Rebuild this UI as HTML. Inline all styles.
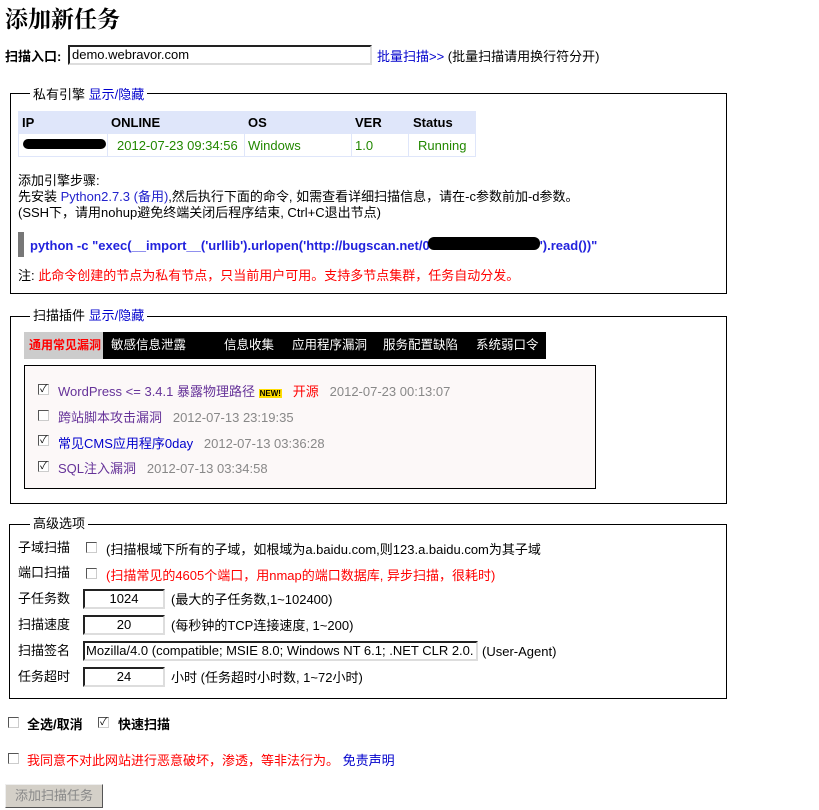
<!DOCTYPE html>
<html><head><meta charset="utf-8"><style>
*{margin:0;padding:0;box-sizing:border-box}
body{width:819px;height:810px;background:#fff;font-family:"Liberation Sans","Noto Sans CJK SC",sans-serif;font-size:13px;color:#000;position:relative;overflow:hidden}
.a{position:absolute;white-space:nowrap;line-height:15px}
.blue{color:#0000cc}
.red{color:#f00}
.fs{position:absolute;border:1px solid #000}
.lg{position:absolute;background:#fff;padding:0 3px;line-height:15px}
.cb{position:absolute;width:11px;height:11px;border:1px solid #555;border-right-color:#ccc;border-bottom-color:#ccc;background:#fff;font-size:10px;line-height:9px;text-align:center}
.inp{position:absolute;height:20px;border:2px inset #ccc;border-color:#777 #ddd #ddd #777;background:#fff;line-height:16px;font-size:13px;text-align:center;white-space:nowrap}
.grn{color:#228800}
.tab{position:absolute;top:332px;height:27px;line-height:27px;color:#fff;font-size:12.5px;white-space:nowrap}
</style></head><body>
<div class="a" style="left:5px;top:6px;font-size:23px;line-height:28px;font-weight:bold;font-family:'Liberation Serif','Noto Serif CJK SC',serif">添加新任务</div>
<div class="a" style="left:5px;top:49px;font-weight:bold">扫描入口:</div>
<div class="inp" style="left:68px;top:45px;width:304px;text-align:left;padding-left:2px">demo.webravor.com</div>
<div class="a" style="left:377px;top:49px"><span class="blue">批量扫描&gt;&gt;</span> (批量扫描请用换行符分开)</div>

<div class="fs" style="left:10px;top:93px;width:717px;height:201px"></div>
<div class="lg" style="left:30px;top:87px">私有引擎 <span class="blue">显示/隐藏</span></div>
<div style="position:absolute;left:18px;top:111px;width:458px;height:46px;background:#dfe6fa"></div>
<div style="position:absolute;left:19px;top:134px;width:456px;height:22px;background:#fff"></div>
<div style="position:absolute;left:107px;top:134px;width:1px;height:22px;background:#dfe6fa"></div>
<div style="position:absolute;left:244px;top:134px;width:1px;height:22px;background:#dfe6fa"></div>
<div style="position:absolute;left:351px;top:134px;width:1px;height:22px;background:#dfe6fa"></div>
<div style="position:absolute;left:408px;top:134px;width:1px;height:22px;background:#dfe6fa"></div>
<div class="a" style="left:22px;top:115px;font-weight:bold">IP</div>
<div class="a" style="left:111px;top:115px;font-weight:bold">ONLINE</div>
<div class="a" style="left:248px;top:115px;font-weight:bold">OS</div>
<div class="a" style="left:355px;top:115px;font-weight:bold">VER</div>
<div class="a" style="left:413px;top:115px;font-weight:bold">Status</div>
<div style="position:absolute;left:23px;top:139px;width:83px;height:10px;background:#000;border-radius:5px"></div>
<div class="a grn" style="left:117px;top:138px">2012-07-23 09:34:56</div>
<div class="a grn" style="left:248px;top:138px">Windows</div>
<div class="a grn" style="left:355px;top:138px">1.0</div>
<div class="a grn" style="left:418px;top:138px">Running</div>
<div class="a" style="left:18px;top:173px">添加引擎步骤:</div>
<div class="a" style="left:18px;top:189px">先安装 <span style="color:#2222cc">Python2.7.3 (备用)</span>,然后执行下面的命令, 如需查看详细扫描信息，请在-c参数前加-d参数。</div>
<div class="a" style="left:18px;top:205px">(SSH下，请用nohup避免终端关闭后程序结束, Ctrl+C退出节点)</div>
<div style="position:absolute;left:18px;top:232px;width:6px;height:25px;background:#777"></div>
<div class="a" style="left:30px;top:238px;font-weight:bold;color:#2222dd;font-size:13px">python -c "exec(__import__('urllib').urlopen('http://bugscan.net/0<span style="display:inline-block;width:110px"></span>').read())"</div>
<div style="position:absolute;left:428px;top:237px;width:112px;height:13px;background:#000;border-radius:6px"></div>
<div class="a" style="left:18px;top:268px"><span>注:</span> <span class="red">此命令创建的节点为私有节点，只当前用户可用。支持多节点集群，任务自动分发。</span></div>

<div class="fs" style="left:10px;top:316px;width:717px;height:188px"></div>
<div class="lg" style="left:30px;top:308px">扫描插件 <span class="blue">显示/隐藏</span></div>
<div style="position:absolute;left:24px;top:332px;width:522px;height:27px;background:#000"></div>
<div class="tab" style="left:24px;width:79px;background:#ccc;color:#f00;font-weight:bold;font-size:12px;padding-left:5px">通用常见漏洞</div>
<div class="tab" style="left:111px">敏感信息泄露</div>
<div class="tab" style="left:224px">信息收集</div>
<div class="tab" style="left:292px">应用程序漏洞</div>
<div class="tab" style="left:383px">服务配置缺陷</div>
<div class="tab" style="left:476px">系统弱口令</div>
<div style="position:absolute;left:24px;top:365px;width:572px;height:124px;background:#fcf8f8;border:1px solid #000"></div>
<div class="cb" style="left:38px;top:384px">✓</div>
<div class="a" style="left:58px;top:384px;color:#663399">WordPress &lt;= 3.4.1 暴露物理路径 <span style="background:#ffdd00;color:#000;font-size:8px;font-weight:bold;padding:0 1px">NEW!</span>&nbsp;&nbsp; <span class="red">开源</span>&nbsp;&nbsp; <span style="color:#888">2012-07-23 00:13:07</span></div>
<div class="cb" style="left:38px;top:410px"></div>
<div class="a" style="left:58px;top:410px;color:#663399">跨站脚本攻击漏洞&nbsp;&nbsp; <span style="color:#888">2012-07-13 23:19:35</span></div>
<div class="cb" style="left:38px;top:435px">✓</div>
<div class="a" style="left:58px;top:436px;color:#0000cc">常见CMS应用程序0day&nbsp;&nbsp; <span style="color:#888">2012-07-13 03:36:28</span></div>
<div class="cb" style="left:38px;top:461px">✓</div>
<div class="a" style="left:58px;top:461px;color:#663399">SQL注入漏洞&nbsp;&nbsp; <span style="color:#888">2012-07-13 03:34:58</span></div>

<div class="fs" style="left:9px;top:524px;width:718px;height:175px"></div>
<div class="lg" style="left:30px;top:516px">高级选项</div>
<div class="a" style="left:18px;top:540px">子域扫描</div>
<div class="cb" style="left:86px;top:542px"></div>
<div class="a" style="left:106px;top:542px">(扫描根域下所有的子域，如根域为a.baidu.com,则123.a.baidu.com为其子域</div>
<div class="a" style="left:18px;top:565px">端口扫描</div>
<div class="cb" style="left:86px;top:568px"></div>
<div class="a red" style="left:106px;top:568px">(扫描常见的4605个端口，用nmap的端口数据库, 异步扫描，很耗时)</div>
<div class="a" style="left:18px;top:591px">子任务数</div>
<div class="inp" style="left:83px;top:589px;width:82px">1024</div>
<div class="a" style="left:171px;top:592px">(最大的子任务数,1~102400)</div>
<div class="a" style="left:18px;top:617px">扫描速度</div>
<div class="inp" style="left:83px;top:615px;width:82px">20</div>
<div class="a" style="left:171px;top:618px">(每秒钟的TCP连接速度, 1~200)</div>
<div class="a" style="left:18px;top:643px">扫描签名</div>
<div class="inp" style="left:83px;top:641px;width:395px;text-align:left;padding-left:1px;overflow:hidden">Mozilla/4.0 (compatible; MSIE 8.0; Windows NT 6.1; .NET CLR 2.0.</div>
<div class="a" style="left:482px;top:644px">(User-Agent)</div>
<div class="a" style="left:18px;top:669px">任务超时</div>
<div class="inp" style="left:83px;top:667px;width:82px">24</div>
<div class="a" style="left:171px;top:670px">小时 (任务超时小时数, 1~72小时)</div>

<div class="cb" style="left:8px;top:717px"></div>
<div class="a" style="left:27px;top:717px;font-weight:bold">全选/取消</div>
<div class="cb" style="left:98px;top:717px">✓</div>
<div class="a" style="left:118px;top:717px;font-weight:bold">快速扫描</div>
<div class="cb" style="left:8px;top:753px"></div>
<div class="a red" style="left:27px;top:753px">我同意不对此网站进行恶意破坏，渗透，等非法行为。 <span class="blue">免责声明</span></div>
<div style="position:absolute;left:5px;top:784px;width:98px;height:24px;background:#d4d0c8;border:1px solid;border-color:#eee #555 #555 #eee;color:#888;text-align:center;line-height:22px">添加扫描任务</div>
</body></html>
